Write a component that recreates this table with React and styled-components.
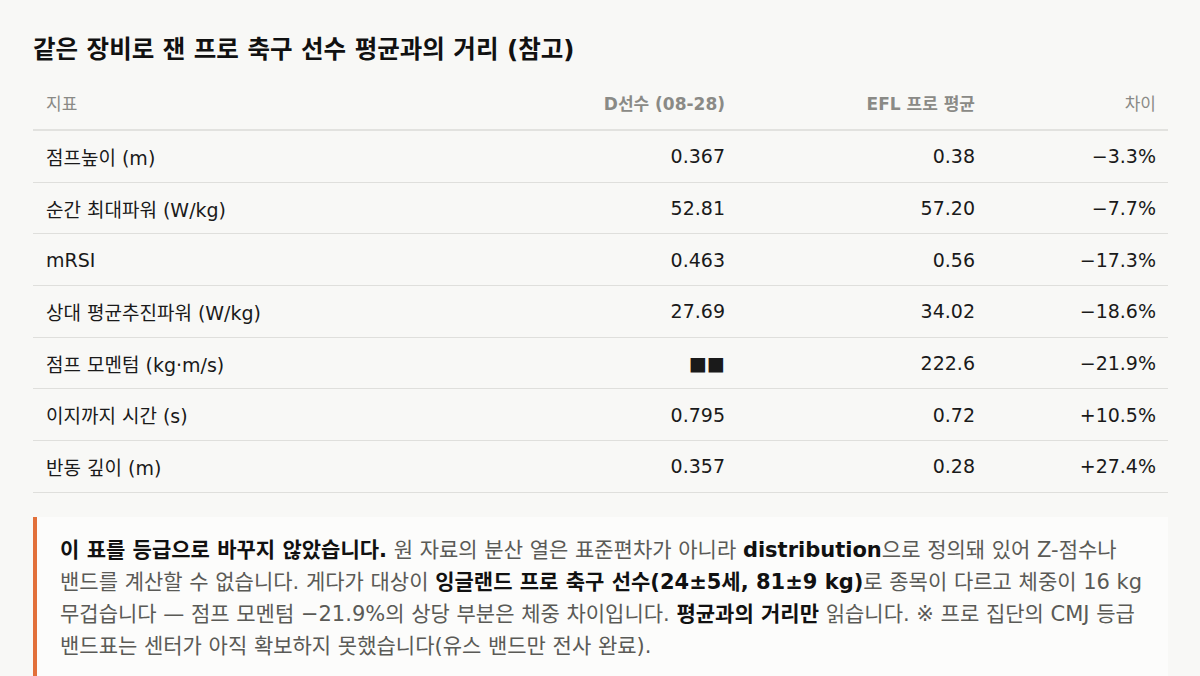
import React from 'react'
import styled, { createGlobalStyle } from 'styled-components'

const GlobalStyle = createGlobalStyle`
  html, body {
    margin: 0;
    padding: 0;
    background: #f8f8f6;
  }
  body {
    font-family: "DejaVu Sans", "Noto Sans CJK KR", sans-serif;
    color: #111;
  }
`

const rows = [
  { label: '점프높이 (m)', d: '0.367', efl: '0.38', diff: '−3.3%' },
  { label: '순간 최대파워 (W/kg)', d: '52.81', efl: '57.20', diff: '−7.7%' },
  { label: 'mRSI', d: '0.463', efl: '0.56', diff: '−17.3%' },
  { label: '상대 평균추진파워 (W/kg)', d: '27.69', efl: '34.02', diff: '−18.6%' },
  { label: '점프 모멘텀 (kg·m/s)', d: '■■', efl: '222.6', diff: '−21.9%' },
  { label: '이지까지 시간 (s)', d: '0.795', efl: '0.72', diff: '+10.5%' },
  { label: '반동 깊이 (m)', d: '0.357', efl: '0.28', diff: '+27.4%' }
]

const Page = styled.main`
  padding: 33px 32px 0 33px;
`

const Title = styled.h2`
  margin: 0 0 18px;
  font-size: 24.5px;
  font-weight: 700;
  line-height: 34px;
  color: #111;
`

const Table = styled.table`
  width: 1135px;
  border-collapse: collapse;
  table-layout: fixed;
`

const Th = styled.th`
  padding: 8px 12px 14px 13px;
  vertical-align: top;
  line-height: 22px;
  text-align: ${p => (p.$left ? 'left' : 'right')};
  font-size: 17px;
  font-weight: ${p => (p.$strong ? 700 : 400)};
  color: #8a8a86;
  border-bottom: 2px solid #e2e2df;
`

const Td = styled.td`
  padding: 0 12px 0 13px;
  height: 50.7px;
  text-align: ${p => (p.$left ? 'left' : 'right')};
  font-size: 19px;
  color: #1a1a1a;
  border-bottom: 1px solid #dfdfdc;
  white-space: nowrap;
`

const Callout = styled.div`
  margin-top: 24px;
  width: 1135px;
  box-sizing: border-box;
  background: #fcfcfb;
  border-left: 4px solid #e2703a;
  padding: 17px 14px 20px 23px;
  font-size: 21px;
  line-height: 32px;
  color: #5a5a56;
  word-break: keep-all;
`

const Strong = styled.b`
  color: #111;
  font-weight: 700;
`

export default function App() {
  return (
    <Page>
      <GlobalStyle />
      <Title>같은 장비로 잰 프로 축구 선수 평균과의 거리 (참고)</Title>
      <Table>
        <colgroup>
          <col style={{ width: 454 }} />
          <col style={{ width: 250 }} />
          <col style={{ width: 250 }} />
          <col style={{ width: 181 }} />
        </colgroup>
        <thead>
          <tr>
            <Th $left>지표</Th>
            <Th $strong>D선수 (08-28)</Th>
            <Th $strong>EFL 프로 평균</Th>
            <Th>차이</Th>
          </tr>
        </thead>
        <tbody>
          {rows.map(r => (
            <tr key={r.label}>
              <Td $left>{r.label}</Td>
              <Td>{r.d}</Td>
              <Td>{r.efl}</Td>
              <Td>{r.diff}</Td>
            </tr>
          ))}
        </tbody>
      </Table>
      <Callout>
        <Strong>이 표를 등급으로 바꾸지 않았습니다.</Strong> 원 자료의 분산 열은 표준편차가 아니라{' '}
        <Strong>distribution</Strong>으로 정의돼 있어 Z-점수나 밴드를 계산할 수 없습니다. 게다가 대상이{' '}
        <Strong>잉글랜드 프로 축구 선수(24±5세, 81±9 kg)</Strong>로 종목이 다르고 체중이 16 kg
        무겁습니다 — 점프 모멘텀 −21.9%의 상당 부분은 체중 차이입니다. <Strong>평균과의 거리만</Strong>{' '}
        읽습니다. ※ 프로 집단의 CMJ 등급 밴드표는 센터가 아직 확보하지 못했습니다(유스 밴드만 전사 완료).
      </Callout>
    </Page>
  )
}
